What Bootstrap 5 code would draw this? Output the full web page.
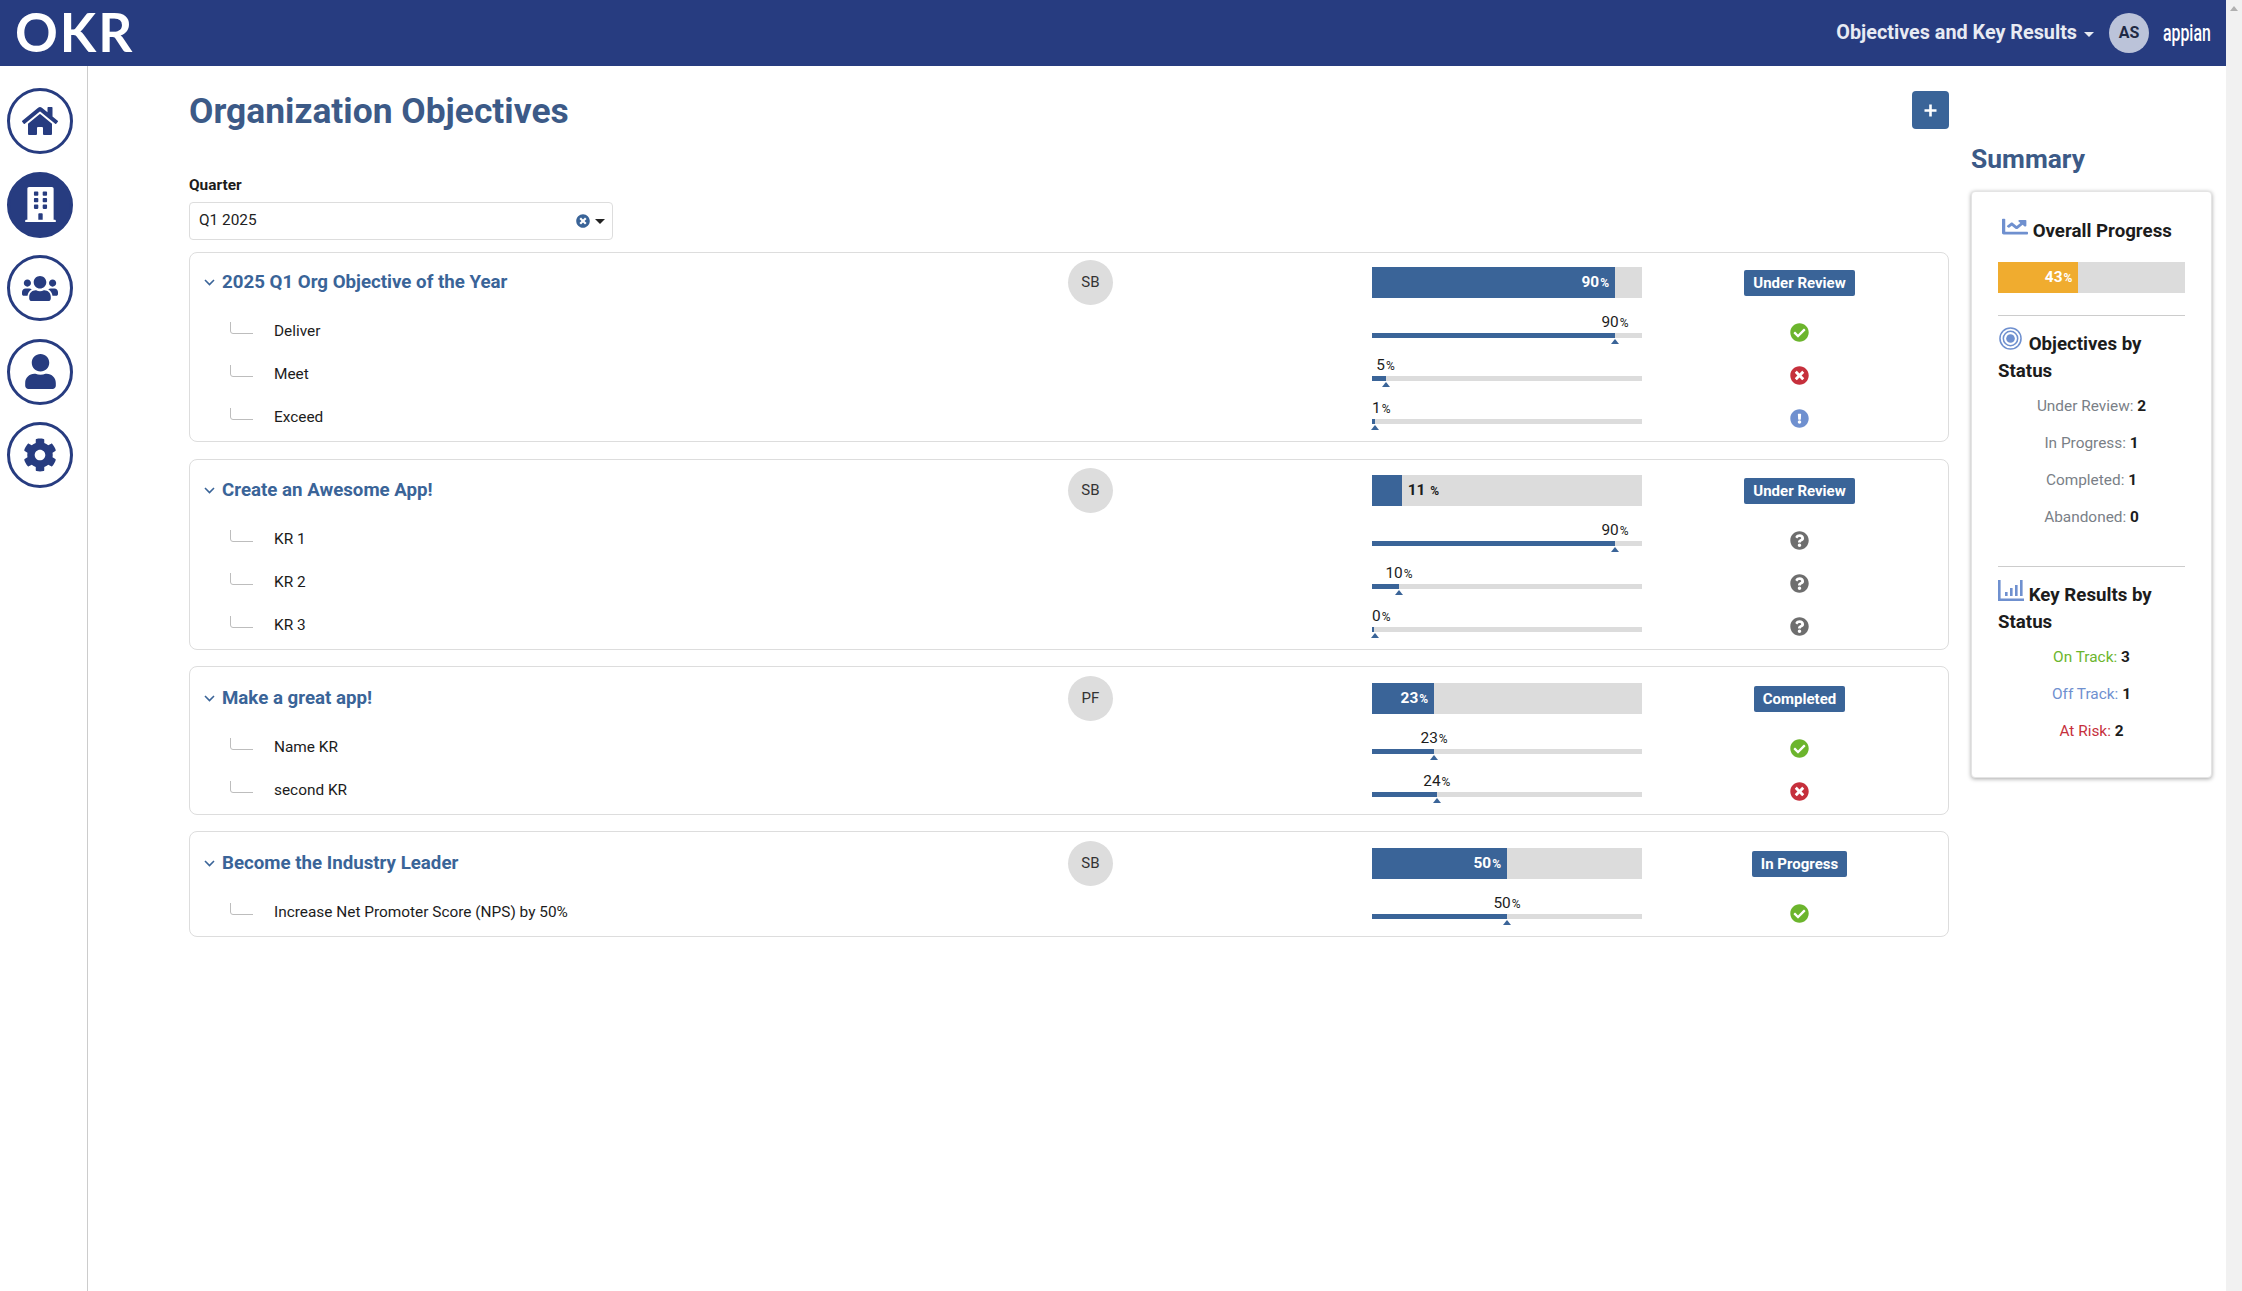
<!DOCTYPE html>
<html lang="en"><head><meta charset="utf-8"><title>OKR</title>
<link href="https://cdn.jsdelivr.net/npm/bootstrap@5.3.0/dist/css/bootstrap.min.css" rel="stylesheet">
<style>
html,body{height:100%;overflow:hidden}
body{font-family:Roboto,"Liberation Sans",sans-serif;font-size:15.4px;color:#1c1c1c;background:#fff}
.okr-shell{height:1291px}
.okr-page{width:2226px}
.okr-scroll{width:16px;background:#f1f1f1;padding-top:6px}
.okr-arrow{width:0;height:0;border-left:4px solid transparent;border-right:4px solid transparent;border-bottom:5px solid #b0b0b0}
.okr-top{height:66px;background:#273c80;padding:0 15px;color:#fff}
.okr-logo{font-size:53px;font-weight:700;line-height:64px;padding-bottom:2px;color:#fff;letter-spacing:2px;font-family:Lato,sans-serif}
.okr-app{font-size:19.8px;font-weight:700;color:#e8ebf3}
.okr-caret{width:0;height:0;border-left:5px solid transparent;border-right:5px solid transparent;border-top:5px solid #e8ebf3;margin:3px 15px 0 7px}
.okr-as{width:40px;height:40px;border-radius:50%;background:#bbc3d9;color:#1f2a44;font-weight:700;font-size:16px}
.okr-appian{font-size:24px;font-weight:500;color:#fff;margin:0 0 0 14px;line-height:1;width:48px;display:inline-block;white-space:nowrap;transform:scaleX(.66);transform-origin:left center}
.okr-side{width:88px;border-right:1px solid #ccc;padding:22px 0 0 7px;gap:17.5px;flex:none}
.okr-nav{width:66px;height:66px;border-radius:50%;border:3px solid #273c80;color:#273c80}
.okr-nav.on{background:#273c80;color:#fff}
.okr-main{width:1861px;padding-left:101px;flex:none}
.okr-h1{font-size:35.4px;font-weight:700;color:#3c5a87;margin:0;line-height:40px;padding-top:25px}
.okr-plus{width:37px;height:38px;background:#3a6498;border-radius:4px;margin:25px 0 0;padding:0;border:0}
.okr-plus:hover{background:#3a6498}
.okr-label{font-weight:700;font-size:15.4px;line-height:18px;margin-top:45px;color:#1c1c1c}
.okr-select{width:424px;height:38px;border:1px solid #ddd;border-radius:4px;margin-top:8px;padding:0 7px 0 9px;font-size:15.4px;color:#222}
.okr-drop{width:0;height:0;border-left:5px solid transparent;border-right:5px solid transparent;border-top:5px solid #222;margin-left:5px}
.okr-card{border:1px solid #ddd;border-radius:8px;margin-top:16px;padding:8px 0 1px 14px}
.okr-card.first{margin-top:12px;padding-top:7px;padding-bottom:2px}
.okr-card.pad1{margin-top:17px;padding-bottom:2px}
.okr-card.pad2{padding-top:9px;padding-bottom:2px}
.okr-grid{display:grid;grid-template-columns:864px 45px 259px 270px 1fr}
.okr-obj{height:44px;margin-bottom:6px}
.okr-kr{height:43px}
.okr-name{font-size:18.7px;font-weight:700;color:#3a6498}
.okr-chev{margin-right:7px;flex:none}
.okr-sb{width:45px;height:45px;border-radius:50%;background:#ddd;font-size:15px;color:#333}
.okr-bigbar{height:31px;background:#dcdcdc;border-radius:0;font-size:15.4px;font-weight:700;overflow:visible}
.okr-bigbar .progress-bar{background:#3a6498;color:#fff;flex-direction:row;justify-content:flex-end;align-items:center;padding-right:6px;overflow:visible;white-space:nowrap}
.okr-bigbar.gold .progress-bar{background:#f0ac2f}
.okr-after{align-self:center;margin-left:6px;color:#1c1c1c;white-space:nowrap}
.okr-pc{font-size:12px;margin-left:1px}
.okr-krname{padding-left:70px;font-size:15.4px;line-height:20px;margin-top:11px}
.okr-tree{position:relative}
.okr-tree svg{position:absolute;left:26px;top:1px}
.okr-lab{font-size:15.4px;line-height:14px;white-space:nowrap;text-align:center;margin-top:5px;height:18px}
.okr-track{height:5px;background:#dcdcdc;border-radius:0}
.okr-track .progress-bar{background:#3a6498}
.okr-tri{width:0;height:0;border-left:4.5px solid transparent;border-right:4.5px solid transparent;border-bottom:5px solid #3a6498;margin-top:1px}
.okr-stat{margin-left:9px}
.okr-statkr{padding-top:13px}
.okr-badge{background:#3a6498;color:#fff;font-size:15px;font-weight:700;border-radius:2px;height:26px;padding:0 9px;line-height:26px}
.okr-side2{width:241px;margin-left:22px;flex:none}
.okr-h2{font-size:26.4px;font-weight:700;color:#3c5a87;margin:0;line-height:30px;padding-top:78px}
.okr-sum{border-radius:4px;box-shadow:0 1px 4px rgba(0,0,0,.35);border:1px solid #e4e4e4;height:587px;margin-top:17px;padding:24px 26px 0}
.okr-st{font-size:18.7px;font-weight:700;line-height:27px;margin:0;color:#1c1c1c}
.okr-ic1{margin-left:4px}
.okr-ic2{margin:0 2px 0 1px}
.okr-gap17{margin-top:17px}
.okr-gap22{margin-top:22px}
.okr-gap11{margin-top:11px}
.okr-gap13{margin-top:13px}
.okr-gap3{margin-top:3px}
.okr-gap30{margin-top:30px}
.okr-rule{border:0;border-top:1px solid #ccc;opacity:1}
.okr-line{text-align:center;height:37px;line-height:37px;font-size:15.4px;color:#7a7f87}
.okr-line b{color:#1c1c1c}
.okr-on{color:#6cb52d}.okr-off{color:#6f90cf}.okr-risk{color:#c6303c}
</style></head>
<body>
<div class="okr-shell d-flex">
<div class="okr-page d-flex flex-column">
 <nav class="okr-top d-flex align-items-center">
  <div class="okr-logo">OKR</div>
  <div class="ms-auto d-flex align-items-center">
   <span class="okr-app">Objectives and Key Results</span><span class="okr-caret"></span>
   <span class="okr-as d-flex align-items-center justify-content-center">AS</span>
   <span class="okr-appian">appian</span>
  </div>
 </nav>
 <div class="d-flex flex-grow-1">
  <aside class="okr-side d-flex flex-column">
   <a class="okr-nav d-flex align-items-center justify-content-center"><svg width="36" height="32" viewBox="0 0 576 512" fill="currentColor"><path d="M280.37 148.26L96 300.11V464a16 16 0 0 0 16 16l112.06-.29a16 16 0 0 0 15.92-16V368a16 16 0 0 1 16-16h64a16 16 0 0 1 16 16v95.64a16 16 0 0 0 16 16.05L464 480a16 16 0 0 0 16-16V300L295.67 148.26a12.19 12.19 0 0 0-15.3 0zM571.6 251.47L488 182.56V44.05a12 12 0 0 0-12-12h-56a12 12 0 0 0-12 12v72.61L318.47 43a48 48 0 0 0-61 0L4.34 251.47a12 12 0 0 0-1.6 16.9l25.5 31A12 12 0 0 0 45.15 301l235.22-193.74a12.19 12.19 0 0 1 15.3 0L530.9 301a12 12 0 0 0 16.9-1.6l25.5-31a12 12 0 0 0-1.7-16.93z"/></svg></a>
   <a class="okr-nav on d-flex align-items-center justify-content-center"><svg width="31" height="35" viewBox="0 0 448 512" fill="currentColor"><path d="M436 480h-20V24c0-13.255-10.745-24-24-24H56C42.745 0 32 10.745 32 24v456H12c-6.627 0-12 5.373-12 12v20h448v-20c0-6.627-5.373-12-12-12zM128 76c0-6.627 5.373-12 12-12h40c6.627 0 12 5.373 12 12v40c0 6.627-5.373 12-12 12h-40c-6.627 0-12-5.373-12-12V76zm0 96c0-6.627 5.373-12 12-12h40c6.627 0 12 5.373 12 12v40c0 6.627-5.373 12-12 12h-40c-6.627 0-12-5.373-12-12v-40zm52 148h-40c-6.627 0-12-5.373-12-12v-40c0-6.627 5.373-12 12-12h40c6.627 0 12 5.373 12 12v40c0 6.627-5.373 12-12 12zm76 160h-64v-84c0-6.627 5.373-12 12-12h40c6.627 0 12 5.373 12 12v84zm64-172c0 6.627-5.373 12-12 12h-40c-6.627 0-12-5.373-12-12v-40c0-6.627 5.373-12 12-12h40c6.627 0 12 5.373 12 12v40zm0-96c0 6.627-5.373 12-12 12h-40c-6.627 0-12-5.373-12-12v-40c0-6.627 5.373-12 12-12h40c6.627 0 12 5.373 12 12v40zm0-96c0 6.627-5.373 12-12 12h-40c-6.627 0-12-5.373-12-12V76c0-6.627 5.373-12 12-12h40c6.627 0 12 5.373 12 12v40z"/></svg></a>
   <a class="okr-nav d-flex align-items-center justify-content-center"><svg width="36" height="29" viewBox="0 0 640 512" fill="currentColor"><path d="M96 224c35.3 0 64-28.7 64-64s-28.7-64-64-64-64 28.7-64 64 28.7 64 64 64zm448 0c35.3 0 64-28.7 64-64s-28.7-64-64-64-64 28.7-64 64 28.7 64 64 64zm32 32h-64c-17.6 0-33.5 7.1-45.1 18.6 40.3 22.1 68.9 62 75.1 109.4h66c17.7 0 32-14.3 32-32v-32c0-35.3-28.7-64-64-64zm-256 0c61.9 0 112-50.1 112-112S381.9 32 320 32 208 82.1 208 144s50.1 112 112 112zm76.8 32h-8.3c-20.8 10-43.9 16-68.5 16s-47.6-6-68.5-16h-8.3C179.6 288 128 339.6 128 403.2V432c0 26.5 21.5 48 48 48h288c26.5 0 48-21.5 48-48v-28.8c0-63.6-51.6-115.2-115.2-115.2zm-223.7-13.4C161.5 263.1 145.6 256 128 256H64c-35.3 0-64 28.7-64 64v32c0 17.7 14.3 32 32 32h65.9c6.3-47.4 34.9-87.3 75.2-109.4z"/></svg></a>
   <a class="okr-nav d-flex align-items-center justify-content-center"><svg width="31" height="35" viewBox="0 0 448 512" fill="currentColor"><path d="M224 256c70.7 0 128-57.3 128-128S294.7 0 224 0 96 57.3 96 128s57.3 128 128 128zm89.6 32h-16.7c-22.2 10.2-46.9 16-72.9 16s-50.6-5.8-72.9-16h-16.7C60.2 288 0 348.2 0 422.4V464c0 26.5 21.5 48 48 48h352c26.5 0 48-21.5 48-48v-41.6c0-74.2-60.2-134.4-134.4-134.4z"/></svg></a>
   <a class="okr-nav d-flex align-items-center justify-content-center"><svg width="34" height="34" viewBox="0 0 512 512" fill="currentColor"><path d="M487.4 315.7l-42.6-24.6c4.3-23.2 4.3-47 0-70.2l42.6-24.6c4.9-2.8 7.1-8.6 5.5-14-11.1-35.6-30-67.8-54.7-94.6-3.8-4.1-10-5.1-14.8-2.3L380.8 110c-17.9-15.4-38.5-27.3-60.8-35.1V25.8c0-5.6-3.9-10.5-9.4-11.7-36.7-8.2-74.3-7.8-109.2 0-5.5 1.2-9.4 6.1-9.4 11.7V75c-22.2 7.9-42.8 19.8-60.8 35.1L88.7 85.5c-4.9-2.8-11-1.9-14.8 2.3-24.7 26.7-43.6 58.9-54.7 94.6-1.7 5.4.6 11.2 5.5 14L67.3 221c-4.3 23.2-4.3 47 0 70.2l-42.6 24.6c-4.9 2.8-7.1 8.6-5.5 14 11.1 35.6 30 67.8 54.7 94.6 3.8 4.1 10 5.1 14.8 2.3l42.6-24.6c17.9 15.4 38.5 27.3 60.8 35.1v49.2c0 5.6 3.9 10.5 9.4 11.7 36.7 8.2 74.3 7.8 109.2 0 5.5-1.2 9.4-6.1 9.4-11.7v-49.2c22.2-7.9 42.8-19.8 60.8-35.1l42.6 24.6c4.9 2.8 11 1.9 14.8-2.3 24.7-26.7 43.6-58.9 54.7-94.6 1.5-5.5-.7-11.3-5.6-14.1zM256 336c-44.1 0-80-35.9-80-80s35.9-80 80-80 80 35.9 80 80-35.9 80-80 80z"/></svg></a>
  </aside>
  <main class="okr-main">
   <div class="d-flex justify-content-between align-items-start">
    <h1 class="okr-h1">Organization Objectives</h1>
    <button class="btn okr-plus d-flex align-items-center justify-content-center" type="button" aria-label="Add"><svg width="13" height="13" viewBox="0 0 13 13"><path d="M6.5 0.5v12M0.5 6.5h12" stroke="#fff" stroke-width="2.6"/></svg></button>
   </div>
   <div class="okr-label">Quarter</div>
   <div class="okr-select d-flex align-items-center"><span>Q1 2025</span>
    <svg class="ms-auto" width="14" height="14" viewBox="0 0 512 512" fill="#3a6498"><path d="M256 8C119 8 8 119 8 256s111 248 248 248 248-111 248-248S393 8 256 8zm121.6 313.1c4.7 4.7 4.7 12.3 0 17L338 377.6c-4.7 4.7-12.3 4.7-17 0L256 312l-65.1 65.6c-4.7 4.7-12.3 4.7-17 0L134.4 338c-4.7-4.7-4.7-12.3 0-17l65.6-65-65.6-65.1c-4.7-4.7-4.7-12.3 0-17l39.6-39.6c4.7-4.7 12.3-4.7 17 0l65 65.7 65.1-65.6c4.7-4.7 12.3-4.7 17 0l39.6 39.6c4.7 4.7 4.7 12.3 0 17L312 256l65.6 65.1z"/></svg><span class="okr-drop"></span></div>
   <div id="okrs"></div>
  </main>
  <aside class="okr-side2">
   <h2 class="okr-h2">Summary</h2>
   <div class="okr-sum bg-white">
    <h3 class="okr-st"><svg width="26" height="21" viewBox="0 0 512 512" preserveAspectRatio="none" fill="#6f90cf" class="align-baseline okr-ic1"><path d="M496 384H64V80c0-8.84-7.16-16-16-16H16C7.16 64 0 71.16 0 80v336c0 17.67 14.33 32 32 32h464c8.84 0 16-7.16 16-16v-32c0-8.84-7.16-16-16-16zM464 96H345.940c-21.38 0-32.090 25.850-16.970 40.970l32.400 32.400L288 242.750l-73.370-73.370c-12.500-12.500-32.760-12.500-45.250 0l-68.690 68.690c-6.250 6.250-6.250 16.380 0 22.630l22.620 22.620c6.250 6.250 16.380 6.250 22.630 0L192 237.250l73.370 73.370c12.500 12.500 32.760 12.500 45.250 0l96-96 32.400 32.400c15.120 15.120 40.970 4.410 40.970-16.970V112c.01-8.840-7.150-16-15.990-16z"/></svg> Overall Progress</h3>
    <div class="progress okr-bigbar gold okr-gap17"><div class="progress-bar" style="width:43%">43<span class="okr-pc">%</span></div></div>
    <hr class="okr-rule okr-gap22 mb-0">
    <h3 class="okr-st okr-gap11"><svg width="23" height="23" viewBox="0 0 24 24" fill="none" stroke="#6f90cf" class="align-baseline okr-ic2"><circle cx="12" cy="12" r="11" stroke-width="1.6"/><circle cx="12" cy="12" r="7.5" stroke-width="1.6"/><circle cx="12" cy="12" r="4.500" fill="#6f90cf" stroke="none"/></svg> Objectives by Status</h3>
    <div class="okr-gap3">
    <div class="okr-line">Under Review: <b>2</b></div><div class="okr-line">In Progress: <b>1</b></div><div class="okr-line">Completed: <b>1</b></div><div class="okr-line">Abandoned: <b>0</b></div>
    </div>
    <hr class="okr-rule okr-gap30 mb-0">
    <h3 class="okr-st okr-gap13"><svg width="26" height="21" viewBox="0 0 26 21" fill="#6f90cf" class="align-baseline"><path d="M0 0h2.600v18.400H26V21H0zM7 12h2.600v4H7zM12 8h2.600v8H12zM17 5h2.600v11H17zM22 0h2.600v16H22z"/></svg> Key Results by Status</h3>
    <div class="okr-gap3">
    <div class="okr-line okr-on">On Track: <b>3</b></div><div class="okr-line okr-off">Off Track: <b>1</b></div><div class="okr-line okr-risk">At Risk: <b>2</b></div>
    </div>
   </div>
  </aside>
 </div>
</div>
<div class="okr-scroll d-flex flex-column align-items-center"><span class="okr-arrow"></span></div>
</div>
<script>
var I={ok:['#6cb52d','M504 256c0 136.967-111.033 248-248 248S8 392.967 8 256 119.033 8 256 8s248 111.033 248 248zM227.314 387.314l184-184c6.248-6.248 6.248-16.379 0-22.627l-22.627-22.627c-6.248-6.249-16.379-6.249-22.628 0L216 308.118l-70.059-70.059c-6.248-6.248-16.379-6.248-22.628 0l-22.627 22.627c-6.248 6.248-6.248 16.379 0 22.627l104 104c6.249 6.249 16.379 6.249 22.628.001z'],
x:['#c6303c','M256 8C119 8 8 119 8 256s111 248 248 248 248-111 248-248S393 8 256 8zm121.6 313.1c4.7 4.7 4.7 12.3 0 17L338 377.6c-4.7 4.7-12.3 4.7-17 0L256 312l-65.1 65.6c-4.7 4.7-12.3 4.7-17 0L134.4 338c-4.7-4.7-4.7-12.3 0-17l65.6-65-65.6-65.1c-4.7-4.7-4.7-12.3 0-17l39.6-39.6c4.7-4.7 12.3-4.7 17 0l65 65.7 65.1-65.6c4.7-4.7 12.3-4.7 17 0l39.6 39.6c4.7 4.7 4.7 12.3 0 17L312 256l65.6 65.1z'],
ex:['#6f90cf','M504 256c0 136.997-111.043 248-248 248S8 392.997 8 256C8 119.083 119.043 8 256 8s248 111.083 248 248zm-248 50c-25.405 0-46 20.595-46 46s20.595 46 46 46 46-20.595 46-46-20.595-46-46-46zm-43.673-165.346l7.418 136c.347 6.364 5.609 11.346 11.982 11.346h48.546c6.373 0 11.635-4.982 11.982-11.346l7.418-136c.375-6.874-5.098-12.654-11.982-12.654h-63.383c-6.884 0-12.356 5.78-11.981 12.654z'],
q:['#6e6e6e','M504 256c0 136.997-111.043 248-248 248S8 392.997 8 256C8 119.083 119.043 8 256 8s248 111.083 248 248zM262.655 90c-54.497 0-89.255 22.957-116.549 63.758-3.536 5.286-2.353 12.415 2.715 16.258l34.699 26.31c5.205 3.947 12.621 3.008 16.665-2.122 17.864-22.658 30.113-35.797 57.303-35.797 20.429 0 45.698 13.148 45.698 32.958 0 14.976-12.363 22.667-32.534 33.976C247.128 238.528 216 254.941 216 296v4c0 6.627 5.373 12 12 12h56c6.627 0 12-5.373 12-12v-1.333c0-28.462 83.186-29.647 83.186-106.667 0-58.002-60.165-102-116.531-102zM256 338c-25.365 0-46 20.635-46 46 0 25.364 20.635 46 46 46s46-20.636 46-46c0-25.365-20.635-46-46-46z']};
var D=[
{n:'2025 Q1 Org Objective of the Year',o:'SB',p:90,s:'Under Review',c:'first',k:[['Deliver',90,'ok'],['Meet',5,'x'],['Exceed',1,'ex']]},
{n:'Create an Awesome App!',o:'SB',p:11,s:'Under Review',c:'pad1',k:[['KR 1',90,'q'],['KR 2',10,'q'],['KR 3',0,'q']]},
{n:'Make a great app!',o:'PF',p:23,s:'Completed',c:'pad2',k:[['Name KR',23,'ok'],['second KR',24,'x']]},
{n:'Become the Industry Leader',o:'SB',p:50,s:'In Progress',c:'pad2',k:[['Increase Net Promoter Score (NPS) by 50%',50,'ok']]}];
var h='';
D.forEach(function(o){
 var inner=o.p<15;
 h+='<section class="okr-card '+o.c+'"><div class="okr-grid okr-obj align-items-center">'+
 '<div class="okr-name d-flex align-items-center"><svg class="okr-chev" width="11" height="7" viewBox="0 0 11 7" fill="none" stroke="#3a6498" stroke-width="1.6"><path d="M1 1l4.5 4.5L10 1"/></svg>'+o.n+'</div>'+
 '<div class="okr-sb d-flex align-items-center justify-content-center">'+o.o+'</div><div></div>'+
 '<div class="progress okr-bigbar"><div class="progress-bar" style="width:'+o.p+'%">'+(inner?'':o.p+'<span class="okr-pc">%</span>')+'</div>'+(inner?'<span class="okr-after">'+o.p+' <span class="okr-pc">%</span></span>':'')+'</div>'+
 '<div class="okr-stat d-flex justify-content-center"><span class="badge okr-badge">'+o.s+'</span></div></div>';
 o.k.forEach(function(k){
  var x=k[1]*2.7, fw=Math.max(x,k[1]?3:2), lw=Math.max(x*2,18), tm=Math.max(x,3)-4.5+(k[1]<2?0:.5);
  h+='<div class="okr-grid okr-kr"><div class="okr-krname okr-tree"><svg width="24" height="13" viewBox="0 0 24 13" fill="none" stroke="#bdbdbd"><path d="M.5 0v9q0 2.500 2.500 2.500H23"/></svg>'+k[0]+'</div><div></div><div></div>'+
  '<div><div class="okr-lab" style="width:'+lw+'px"><span>'+k[1]+'</span><span class="okr-pc">%</span></div><div class="progress okr-track"><div class="progress-bar" style="width:'+fw+'px"></div></div><div class="okr-tri" style="margin-left:'+tm+'px"></div></div>'+
  '<div class="okr-stat okr-statkr d-flex justify-content-center"><svg width="19" height="19" viewBox="0 0 512 512" fill="'+I[k[2]][0]+'"><path d="'+I[k[2]][1]+'"/></svg></div></div>';
 });
 h+='</section>';
});
document.getElementById('okrs').innerHTML=h;
</script>
<script src="https://cdn.jsdelivr.net/npm/bootstrap@5.3.0/dist/js/bootstrap.bundle.min.js"></script>
</body></html>
